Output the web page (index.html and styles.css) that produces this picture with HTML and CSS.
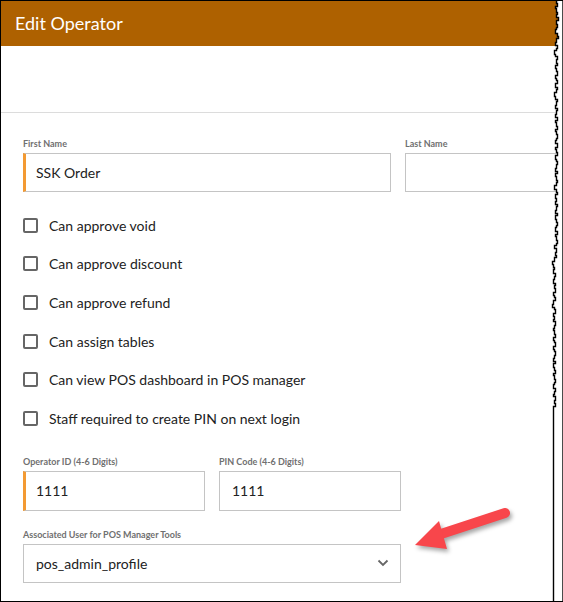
FILE: index.html
```html
<!DOCTYPE html>
<html lang="en">

<head>
    <meta charset="UTF-8">
    <meta name="viewport" content="width=device-width, initial-scale=1.0">
    <title>Edit Operator</title>

    <link rel="stylesheet" href="styles.css">
</head>

<body>

    <div class='frame'>
        <div class='header'>Edit Operator</div>
        <div class='toolbar'></div>

        <div class='form'>
            <div class='row'>
                <div class='group wide'>
                    <div class='label'>First Name</div>
                    <div class='field required'>SSK Order</div>
                </div>
                <div class='group wide'>
                    <div class='label'>Last Name</div>
                    <div class='field'></div>
                </div>
            </div>

            <ul class='checks'>
                <li><span class='box'></span>Can approve void</li>
                <li><span class='box'></span>Can approve discount</li>
                <li><span class='box'></span>Can approve refund</li>
                <li><span class='box'></span>Can assign tables</li>
                <li><span class='box'></span>Can view POS dashboard in POS manager</li>
                <li><span class='box'></span>Staff required to create PIN on next login</li>
            </ul>

            <div class='row'>
                <div class='group narrow'>
                    <div class='label'>Operator ID (4-6 Digits)</div>
                    <div class='field required tall'>1111</div>
                </div>
                <div class='group narrow'>
                    <div class='label'>PIN Code (4-6 Digits)</div>
                    <div class='field tall pin'>1111</div>
                </div>
            </div>

            <div class='group select-group'>
                <div class='label'>Associated User for POS Manager Tools</div>
                <div class='field select'>
                    <span>pos_admin_profile</span>
                    <svg class='chevron' width="12" height="8" viewBox="0 0 12 8">
                        <polyline points="1.5,1.5 6,6 10.5,1.5" fill="none" stroke="#666" stroke-width="1.8" />
                    </svg>
                </div>
            </div>
        </div>

        <!-- callout arrow -->
        <svg class='arrow' width="120" height="70" viewBox="0 0 120 70">
            <line x1="41" y1="39" x2="105" y2="18" stroke="#f8464b" stroke-width="10" stroke-linecap="round" />
            <polygon points="15,50 39,26 47,54" fill="#f8464b" />
        </svg>

        <!-- torn right edge, stepped like a cut screenshot -->
        <svg class='torn' width="14" height="604" viewBox="0 0 14 604">
            <path d="M7.5 0.5 v3 h1 v3 h-2 v2 h1 v4 h1 v2 h-1 v3 h2 v3 h-2 v4 h1 v3 h-1 v2 h-1 v4 h2 v3 h1 v2 h-2 v4 h-1 v3 h2 v3 h-1 v2 h-2 v4 h1 v2 h2 v3 h-1 v4 h1 v2 h-2 v3 h1 v3 h1 v4 h-2 v3 h1 v2 h1 v3 h-2 v4 h2 v2 h-1 v3 h-2 v4 h1 v3 h2 v2 h-1 v4 h-1 v3 h2 v2 h-1 v4 h-1 v3 h2 v3 h-2 v2 h1 v4 h1 v3 h-2 v2 h1 v3 h1 v4 h-1 v2 h-1 v3 h2 v4 h-2 v2 h1 v3 h1 v3 h-2 v4 h1 v2 h1 v3 h-1 v4 h-1 v3 h2 v2 h-2 v3 h1 v4 h1 v2 h-1 v3 h-2 v4 h2 v3 h1 v2 h-2 v4 h1 v3 h-1 v3 h2 v2 h-1 v4 h-1 v3 h2 v2 h-2 v4 h1 v3 h1 v3 h-1 v2 h-1 v4 h2 v3 h-2 v2 h1 v4 h1 v3 h-1 v2 h-2 v3 h2 v4 h-1 v3 h1 v2 h-2 v4 h-2 v3 h1 v3 h1 v2 h-1 v4 h2 v3 h-1 v3 h-1 v4 h2 v2 h-1 v3 h1 v4 h-2 v3 h1 v2 h1 v3 h-2 v4 h-1 v3 h2 v2 h1 v4 h-2 v3 h1 v3 h-1 v2 h2 v4 h-1 v3 h-1 v2 h1 v4 h1 v3 h-2 v3 h1 v2 h1 v4 h-2 v3 h1 v2 h1 v4 h-1 v3 h-1 v3 h2 v2 h-2 v4 h1 v3 h1 v3 h-2 v2 h1 v4 h1 v3 h-1 v2 h-1 v4 h2 v3 h-1 v3 h-1 v2 h2 v4 h-1 v3 h1 v3 h-2 V604 H14 V0 Z"
                fill="#fff" stroke="#000" stroke-width="1.4" />
        </svg>
    </div>

</body>

</html>
```

FILE: styles.css
```css
* {
    padding: 0;
    margin: 0;
    box-sizing: border-box;
}

body {
    background: #fff;
    font-family: Lato, "Open Sans", sans-serif;
}

ul {
    list-style: none;
}

.frame {
    width: 563px;
    height: 602px;
    border-top: 1px solid #000;
    border-left: 1px solid #000;
    border-bottom: 1px solid #000;
    overflow: hidden;

    position: relative;
}

.header {
    height: 45px;
    line-height: 45px;
    padding-left: 14px;
    background: #ae6100;
    color: #fff;
    font-size: 18px;
}

.toolbar {
    height: 67px;
    border-bottom: 1px solid #dcdcdc;
}

.form {
    padding: 25px 0 0 22px;
    width: 1000px;
}

.row {
    display: flex;
    gap: 14px;
}

.label {
    height: 11px;
    line-height: 11px;
    margin-bottom: 4px;
    font-size: 9px;
    font-weight: 700;
    color: #707070;
}

.field {
    height: 39px;
    line-height: 37px;
    padding-left: 10px;
    border: 1px solid #c4c4c4;
    font-size: 14px;
    color: #222;
}

.field.required {
    border-left: 3px solid #f39a33;
}

.field.tall {
    height: 40px;
    line-height: 38px;
}

.field.pin {
    padding-left: 12px;
}

.wide {
    width: 368px;
}

.narrow {
    width: 182px;
}

.checks {
    margin: 14px 0 18px;
}

.checks li {
    height: 38.6px;
    display: flex;
    align-items: center;
    gap: 11px;
    font-size: 14px;
    color: #222;
}

.checks .box {
    width: 15px;
    height: 15px;
    border: 2px solid #666;
    border-radius: 2px;
}

.select-group {
    width: 378px;
    margin-top: 18px;
}

.field.select {
    padding: 0 11px 0 12px;
    display: flex;
    align-items: center;
    justify-content: space-between;
}

.arrow {
    position: absolute;
    left: 399px;
    top: 494px;
    overflow: visible;
    filter: drop-shadow(2px 3px 2px rgba(0, 0, 0, .35));
}

.torn {
    position: absolute;
    right: 0;
    top: -1px;
}
```
